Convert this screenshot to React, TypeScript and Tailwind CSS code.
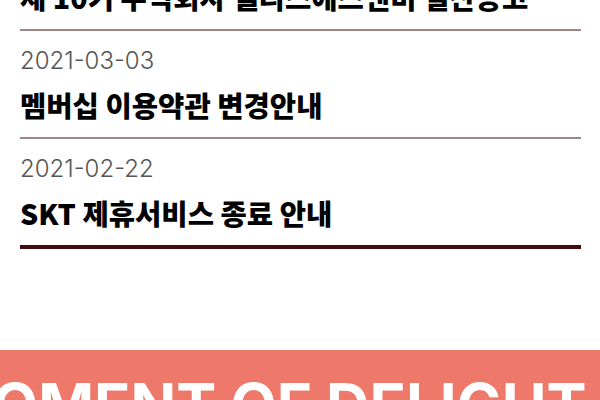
import React from 'react';

const NOTICES = [
  { date: '2021-03-25', title: '제 10기 주식회사 델리스에스앤비 결산공고' },
  { date: '2021-03-03', title: '멤버십 이용약관 변경안내' },
  { date: '2021-02-22', title: 'SKT 제휴서비스 종료 안내' },
];

export default function App() {
  return (
    <div className="w-[600px] h-[400px] overflow-hidden bg-white flex flex-col">
      {/* Notice list (scrolled, first item cut off) */}
      <ul className="-mt-[77px] pl-5 pr-[19px]">
        {NOTICES.map((n, i) => (
          <li
            key={n.date}
            className={`pt-4 pb-[14px] ${
              i === NOTICES.length - 1 ? 'border-b-4 border-[#410b0f]' : 'border-b-2 border-[#a08587]'
            }`}
          >
            <div className="h-7 leading-7 text-[24px] font-light text-[#555] font-['Inter','Noto_Sans_CJK_KR',sans-serif]">
              {n.date}
            </div>
            <div className="mt-3 h-9 leading-9 text-[28.6px] font-black text-black whitespace-nowrap font-['Noto_Sans_CJK_KR',sans-serif]">
              {n.title}
            </div>
          </li>
        ))}
      </ul>

      {/* Slogan banner */}
      <div className="mt-[101px] h-[50px] bg-[#ee7869] overflow-hidden">
        <div className="mt-[25px] -ml-[64px] whitespace-nowrap text-[60px] leading-[60px] font-bold text-white font-['Inter',sans-serif]">
          MOMENT OF DELIGHT MOMENT OF DELIGHT
        </div>
      </div>
    </div>
  );
}
